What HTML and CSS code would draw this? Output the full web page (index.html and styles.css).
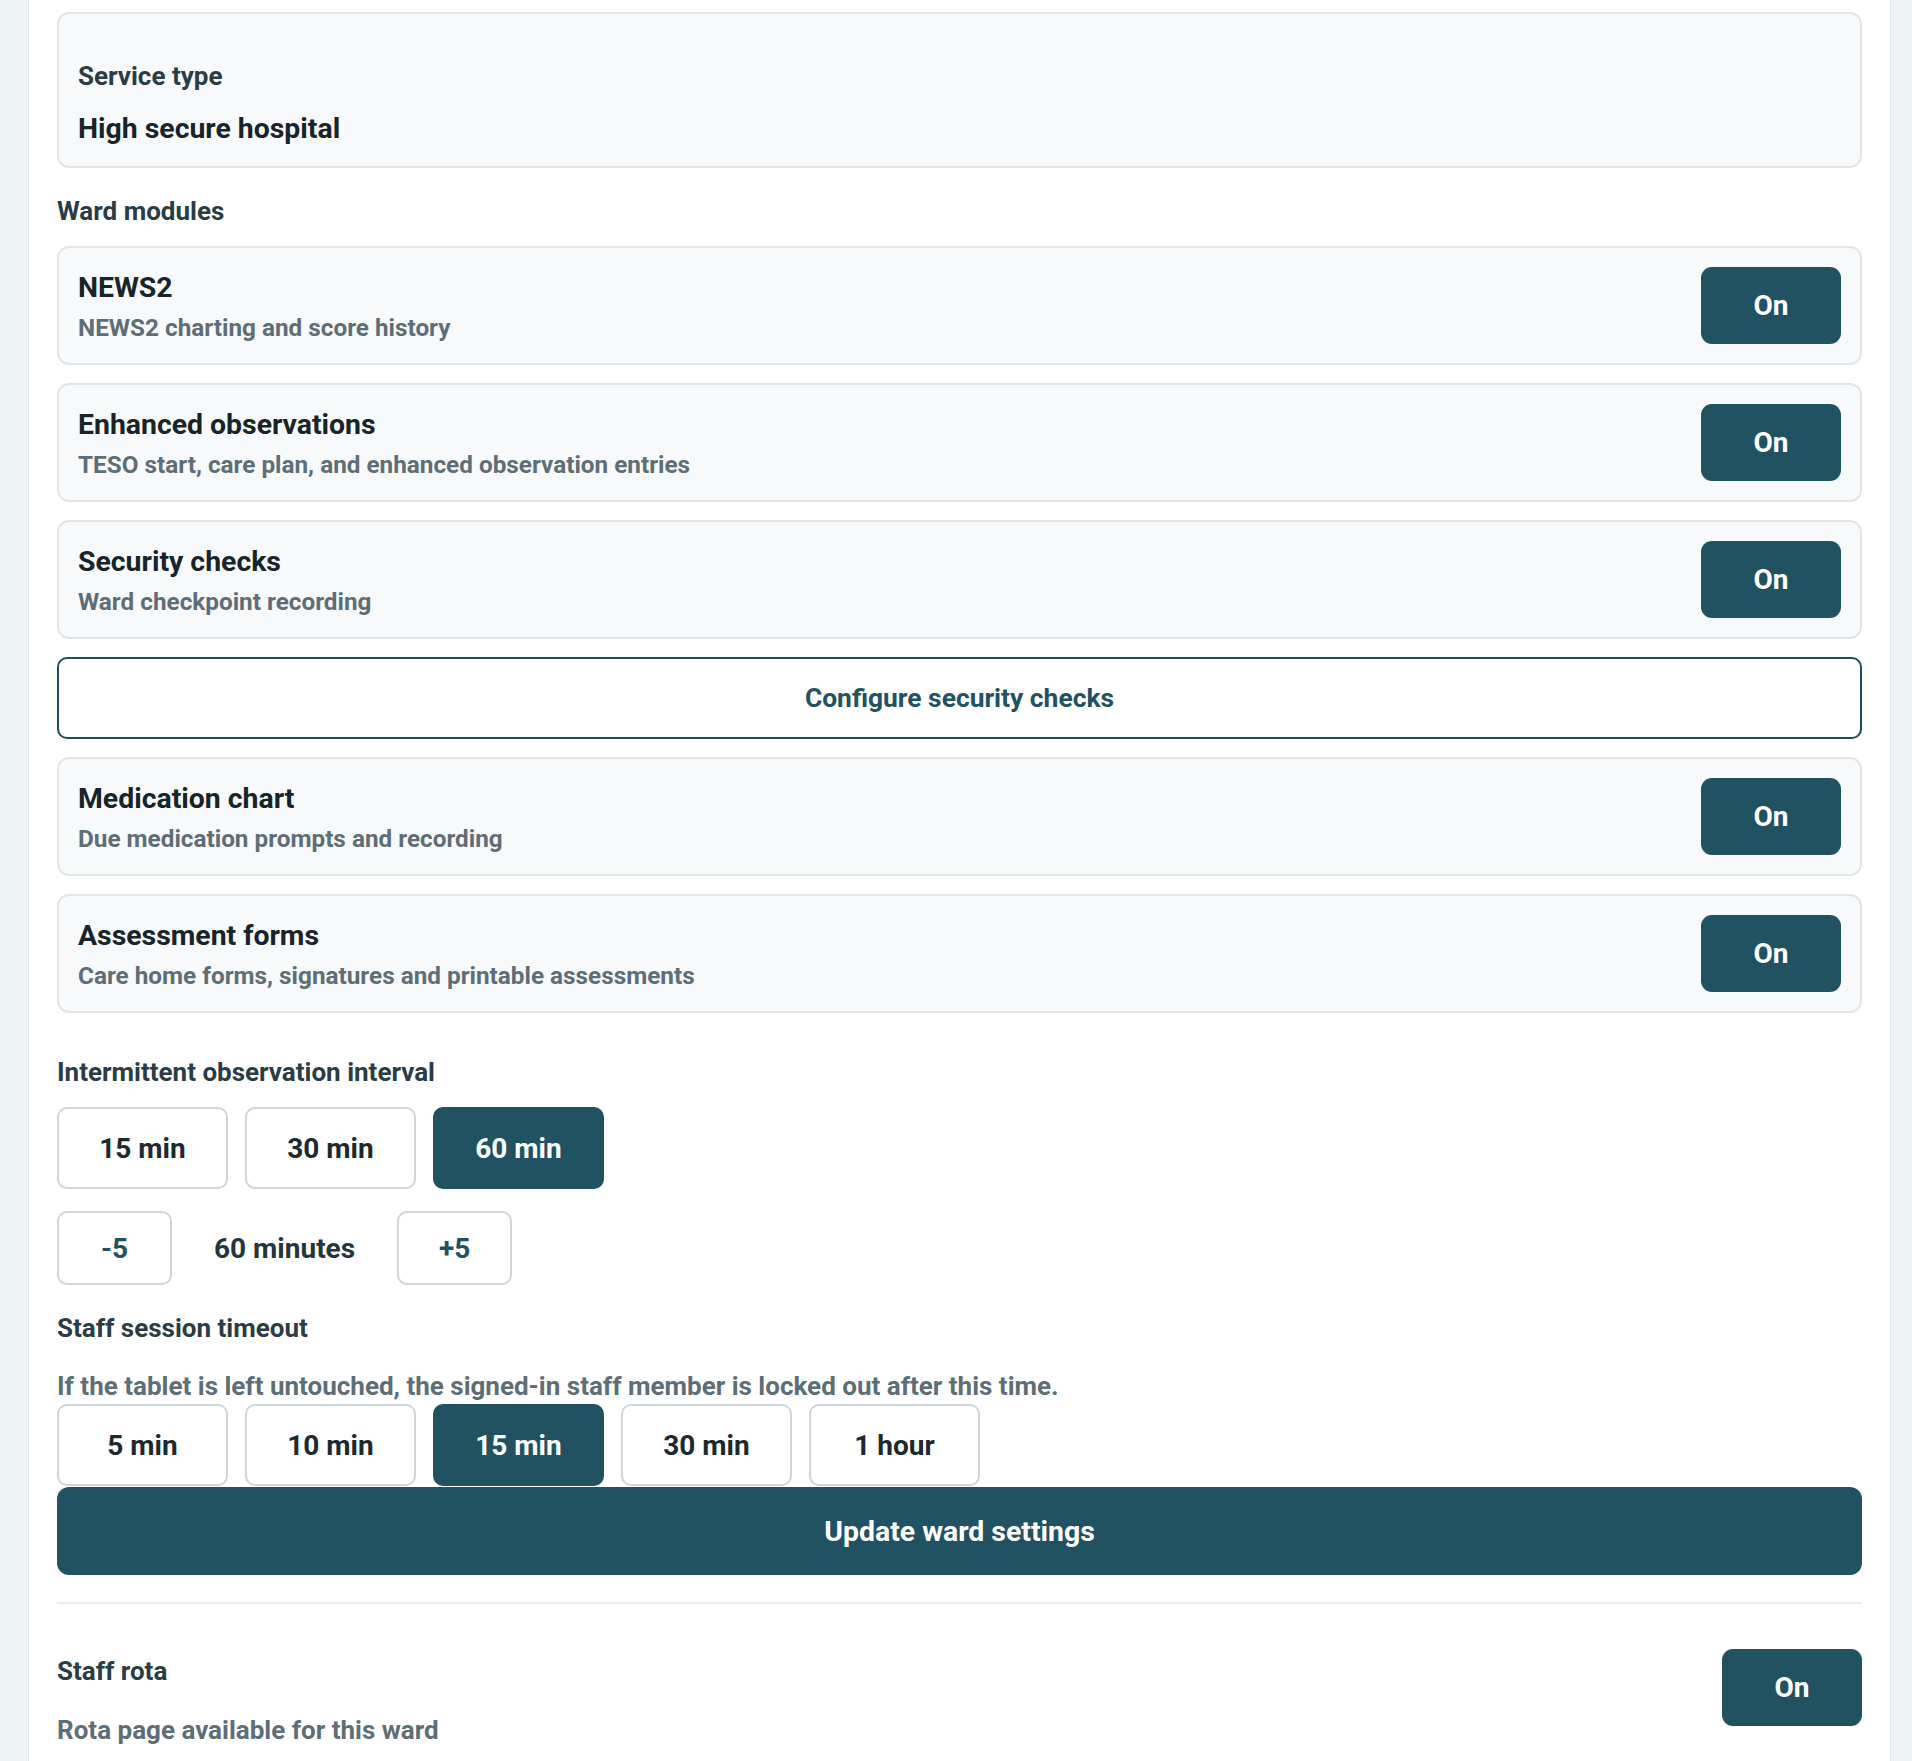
FILE: index.html
```html
<!DOCTYPE html>
<html lang="en">
<head>
<meta charset="utf-8">
<title>Ward settings</title>
<link rel="stylesheet" href="styles.css">
</head>
<body>
<div class="panel">
  <div class="form">
    <div class="card service">
      <div class="label">Service type</div>
      <div class="value">High secure hospital</div>
    </div>

    <div class="label section-label">Ward modules</div>

    <div class="card module">
      <div class="module-text">
        <div class="title">NEWS2</div>
        <div class="desc">NEWS2 charting and score history</div>
      </div>
      <button class="toggle">On</button>
    </div>

    <div class="card module">
      <div class="module-text">
        <div class="title">Enhanced observations</div>
        <div class="desc">TESO start, care plan, and enhanced observation entries</div>
      </div>
      <button class="toggle">On</button>
    </div>

    <div class="card module">
      <div class="module-text">
        <div class="title">Security checks</div>
        <div class="desc">Ward checkpoint recording</div>
      </div>
      <button class="toggle">On</button>
    </div>

    <button class="outline-btn">Configure security checks</button>

    <div class="card module">
      <div class="module-text">
        <div class="title">Medication chart</div>
        <div class="desc">Due medication prompts and recording</div>
      </div>
      <button class="toggle">On</button>
    </div>

    <div class="card module">
      <div class="module-text">
        <div class="title">Assessment forms</div>
        <div class="desc">Care home forms, signatures and printable assessments</div>
      </div>
      <button class="toggle">On</button>
    </div>

    <div class="label section-label spaced">Intermittent observation interval</div>

    <div class="options">
      <button class="opt">15 min</button>
      <button class="opt">30 min</button>
      <button class="opt active">60 min</button>
    </div>

    <div class="stepper">
      <button class="step">-5</button>
      <span class="step-value">60 minutes</span>
      <button class="step">+5</button>
    </div>

    <div class="label section-label">Staff session timeout</div>

    <div class="timeout">
      <p class="hint">If the tablet is left untouched, the signed-in staff member is locked out after this time.</p>
      <div class="options">
        <button class="opt">5 min</button>
        <button class="opt">10 min</button>
        <button class="opt active">15 min</button>
        <button class="opt">30 min</button>
        <button class="opt">1 hour</button>
      </div>
      <button class="primary">Update ward settings</button>
    </div>
  </div>

  <div class="divider"></div>

  <div class="rota">
    <div class="rota-text">
      <div class="label">Staff rota</div>
      <div class="rota-desc">Rota page available for this ward</div>
    </div>
    <button class="toggle">On</button>
  </div>
</div>
</body>
</html>
```

FILE: styles.css
```css
html, body {
  margin: 0;
  padding: 0;
  height: 1761px;
  overflow: hidden;
}

body {
  background: #edf2f2;
  font-family: Roboto, "Noto Sans", "Liberation Sans", sans-serif;
  -webkit-font-smoothing: antialiased;
}

button {
  font: inherit;
  cursor: pointer;
  margin: 0;
}

.panel {
  margin-left: 28px;
  width: 1863px;
  min-height: 1761px;
  box-sizing: border-box;
  background: #ffffff;
  border-left: 1px solid #dfe5e7;
  border-right: 1px solid #dfe5e7;
  padding: 12px 28px 0;
}

.form {
  display: flex;
  flex-direction: column;
  gap: 18px;
}

.card {
  background: #f7f9fa;
  border: 2px solid #e0e5e8;
  border-radius: 12px;
  box-sizing: border-box;
}

.label {
  font-size: 26px;
  line-height: 33px;
  font-weight: 700;
  color: #2a3c44;
}

.section-label {
  margin-top: 9px;
}

.section-label.spaced {
  margin-top: 25px;
}

.service {
  display: flex;
  flex-direction: column;
  gap: 19px;
  padding: 46px 19px 20px;
}

.value {
  font-size: 28.4px;
  line-height: 34px;
  font-weight: 700;
  color: #17242a;
}

.module {
  display: flex;
  align-items: flex-start;
  justify-content: space-between;
  padding: 19px;
}

.module-text {
  padding-top: 4px;
}

.title {
  font-size: 28.4px;
  line-height: 34px;
  font-weight: 700;
  color: #17242a;
}

.desc {
  margin-top: 7px;
  font-size: 24.3px;
  line-height: 32px;
  font-weight: 700;
  color: #5e6e77;
}

.toggle {
  flex: none;
  width: 140px;
  height: 77px;
  border: 0;
  border-radius: 11px;
  background: #215262;
  color: #ffffff;
  font-size: 28px;
  font-weight: 700;
}

.outline-btn {
  height: 82px;
  box-sizing: border-box;
  border: 2px solid #1f4d5c;
  border-radius: 10px;
  background: #ffffff;
  color: #215262;
  font-size: 26.4px;
  font-weight: 700;
}

.options {
  display: flex;
  gap: 17px;
}

.opt {
  width: 171px;
  height: 82px;
  box-sizing: border-box;
  border: 2px solid #cfd6da;
  border-radius: 10px;
  background: #ffffff;
  color: #1c2a30;
  font-size: 28px;
  font-weight: 700;
}

.opt.active {
  background: #215262;
  border-color: #215262;
  color: #ffffff;
}

.stepper {
  display: flex;
  align-items: center;
  gap: 18px;
  margin-top: 4px;
}

.step {
  width: 115px;
  height: 74px;
  box-sizing: border-box;
  border: 2px solid #cfd6da;
  border-radius: 10px;
  background: #ffffff;
  color: #215262;
  font-size: 28px;
  font-weight: 700;
}

.step-value {
  padding: 0 24px;
  font-size: 28px;
  font-weight: 700;
  color: #25353c;
}

.timeout {
  display: flex;
  flex-direction: column;
  margin-top: 7px;
}

.hint {
  margin: 0 0 2px;
  font-size: 26px;
  line-height: 32px;
  font-weight: 700;
  color: #5e6e77;
}

.timeout .options {
  margin-bottom: 1px;
}

.primary {
  height: 88px;
  border: 0;
  border-radius: 12px;
  background: #215262;
  color: #ffffff;
  font-size: 28.4px;
  font-weight: 700;
}

.divider {
  margin-top: 27px;
  height: 2px;
  background: #e9edee;
}

.rota {
  display: flex;
  justify-content: space-between;
  align-items: flex-start;
  padding-top: 45px;
}

.rota-text {
  padding-top: 6px;
}

.rota-desc {
  margin-top: 26px;
  font-size: 26px;
  line-height: 32px;
  font-weight: 700;
  color: #5e6e77;
}
```
